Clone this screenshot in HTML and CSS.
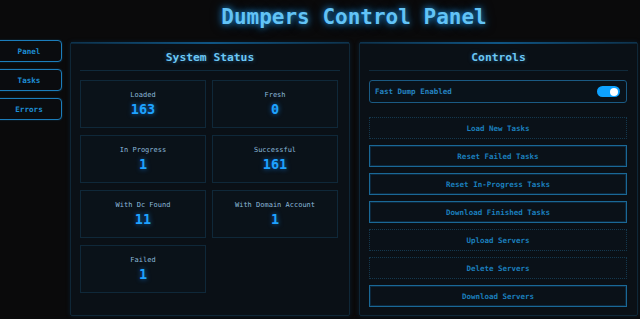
FILE: index.html
```html
<!DOCTYPE html>
<html lang="en">
<head>
<meta charset="utf-8">
<title>Dumpers Control Panel</title>
<link rel="stylesheet" href="styles.css">
</head>
<body>
<div class="app">
  <nav class="sidebar">
    <button class="nav-btn">Panel</button>
    <button class="nav-btn">Tasks</button>
    <button class="nav-btn">Errors</button>
  </nav>
  <main class="main">
    <h1 class="title">Dumpers Control Panel</h1>
    <div class="panels">
      <section class="panel">
        <h2 class="panel-title">System Status</h2>
        <div class="stats">
          <div class="stat"><div class="stat-label">Loaded</div><div class="stat-value">163</div></div>
          <div class="stat"><div class="stat-label">Fresh</div><div class="stat-value">0</div></div>
          <div class="stat"><div class="stat-label">In Progress</div><div class="stat-value">1</div></div>
          <div class="stat"><div class="stat-label">Successful</div><div class="stat-value">161</div></div>
          <div class="stat"><div class="stat-label">With Dc Found</div><div class="stat-value">11</div></div>
          <div class="stat"><div class="stat-label">With Domain Account</div><div class="stat-value">1</div></div>
          <div class="stat"><div class="stat-label">Failed</div><div class="stat-value">1</div></div>
        </div>
      </section>
      <section class="panel">
        <h2 class="panel-title">Controls</h2>
        <div class="toggle-row">
          <span class="toggle-label">Fast Dump Enabled</span>
          <span class="switch"><span class="knob"></span></span>
        </div>
        <div class="actions">
          <button class="action dotted">Load New Tasks</button>
          <button class="action">Reset Failed Tasks</button>
          <button class="action">Reset In-Progress Tasks</button>
          <button class="action">Download Finished Tasks</button>
          <button class="action dotted">Upload Servers</button>
          <button class="action dotted">Delete Servers</button>
          <button class="action">Download Servers</button>
        </div>
      </section>
    </div>
  </main>
</div>
</body>
</html>
```
FILE: styles.css
```css
* { box-sizing: border-box; }
html, body {
  margin: 0;
  padding: 0;
  background: #0a0a0b;
  height: 319px;
  overflow: hidden;
}
body {
  font-family: "DejaVu Sans Mono", "Liberation Mono", monospace;
  color: #1e8bd0;
}
.app {
  display: flex;
  align-items: flex-start;
}
.sidebar {
  display: flex;
  flex-direction: column;
  gap: 7px;
  margin-left: -4px;
  padding-top: 40px;
  width: 66px;
  flex: none;
}
.nav-btn {
  height: 22px;
  width: 66px;
  background: #0a0c0f;
  border: 1px solid #1b7dbb;
  border-radius: 4px;
  box-shadow: 0 0 2px rgba(30, 140, 210, 0.35);
  color: #1e8fd6;
  font-family: inherit;
  font-weight: bold;
  font-size: 7.6px;
  padding: 0;
}
.main {
  margin-left: 8px;
  width: 568px;
  flex: none;
}
.title {
  margin: 0 0 13px;
  padding-top: 5px;
  font-size: 21px;
  line-height: 24px;
  font-weight: bold;
  text-align: center;
  color: #62c3f6;
  text-shadow: 0 0 6px rgba(30, 150, 230, 0.9), 0 0 12px rgba(20, 120, 200, 0.5);
}
.panels {
  display: grid;
  grid-template-columns: 280px 279px;
  gap: 9px;
  align-items: stretch;
}
.panel {
  position: relative;
  background: #0a1016;
  border: 1px solid #0f2737;
  border-radius: 2px;
  padding: 0 9px 8px;
  box-shadow: 0 0 4px rgba(10, 60, 100, 0.35);
}
.panel::before {
  content: "";
  position: absolute;
  left: 0;
  right: 0;
  top: -1px;
  height: 2px;
  background: linear-gradient(90deg, rgba(14, 70, 110, 0.4), #0f5584 50%, rgba(14, 70, 110, 0.4));
}
.panel-title {
  margin: 0;
  padding: 7px 0 4px;
  font-size: 11.3px;
  line-height: 16px;
  font-weight: bold;
  text-align: center;
  color: #6cc6f3;
  text-shadow: 0 0 4px rgba(40, 150, 230, 0.5);
  border-bottom: 1px solid #102a3b;
}
.stats {
  display: grid;
  grid-template-columns: 126px 126px;
  column-gap: 6px;
  row-gap: 7px;
  margin-top: 9px;
}
.stat {
  height: 48px;
  background: #0a1219;
  border: 1px solid #0f2839;
  display: flex;
  flex-direction: column;
  align-items: center;
  justify-content: center;
  gap: 1px;
  padding-bottom: 1px;
}
.stat-label {
  font-size: 7px;
  line-height: 10px;
  color: #8ab9da;
}
.stat-value {
  font-size: 13.5px;
  line-height: 16px;
  font-weight: bold;
  color: #1ea2ff;
  text-shadow: 0 0 5px rgba(20, 140, 255, 0.7);
}
.toggle-row {
  margin-top: 9px;
  width: 258px;
  height: 23px;
  border: 1px solid #1a5a83;
  border-radius: 3px;
  background: #09121a;
  display: flex;
  align-items: center;
  justify-content: space-between;
  padding: 0 6px 0 5px;
}
.toggle-label {
  font-size: 7.5px;
  font-weight: bold;
  color: #2584c2;
}
.switch {
  position: relative;
  width: 23px;
  height: 11px;
  border-radius: 6px;
  background: #0ea2ff;
  display: flex;
  align-items: center;
  justify-content: flex-end;
  padding-right: 2px;
}
.knob {
  width: 8px;
  height: 8px;
  border-radius: 50%;
  background: #ffffff;
}
.actions {
  display: flex;
  flex-direction: column;
  gap: 6px;
  margin-top: 14px;
}
.action {
  width: 258px;
  height: 22px;
  background: #0a1118;
  border: 1px solid #1a6896;
  box-shadow: inset 0 0 0 1px rgba(12, 55, 85, 0.6);
  color: #1b7fbd;
  font-family: inherit;
  font-size: 7.5px;
  font-weight: bold;
  padding: 0;
  text-align: center;
}
.action.dotted {
  border: 1px dotted #14384e;
  box-shadow: none;
}
```
